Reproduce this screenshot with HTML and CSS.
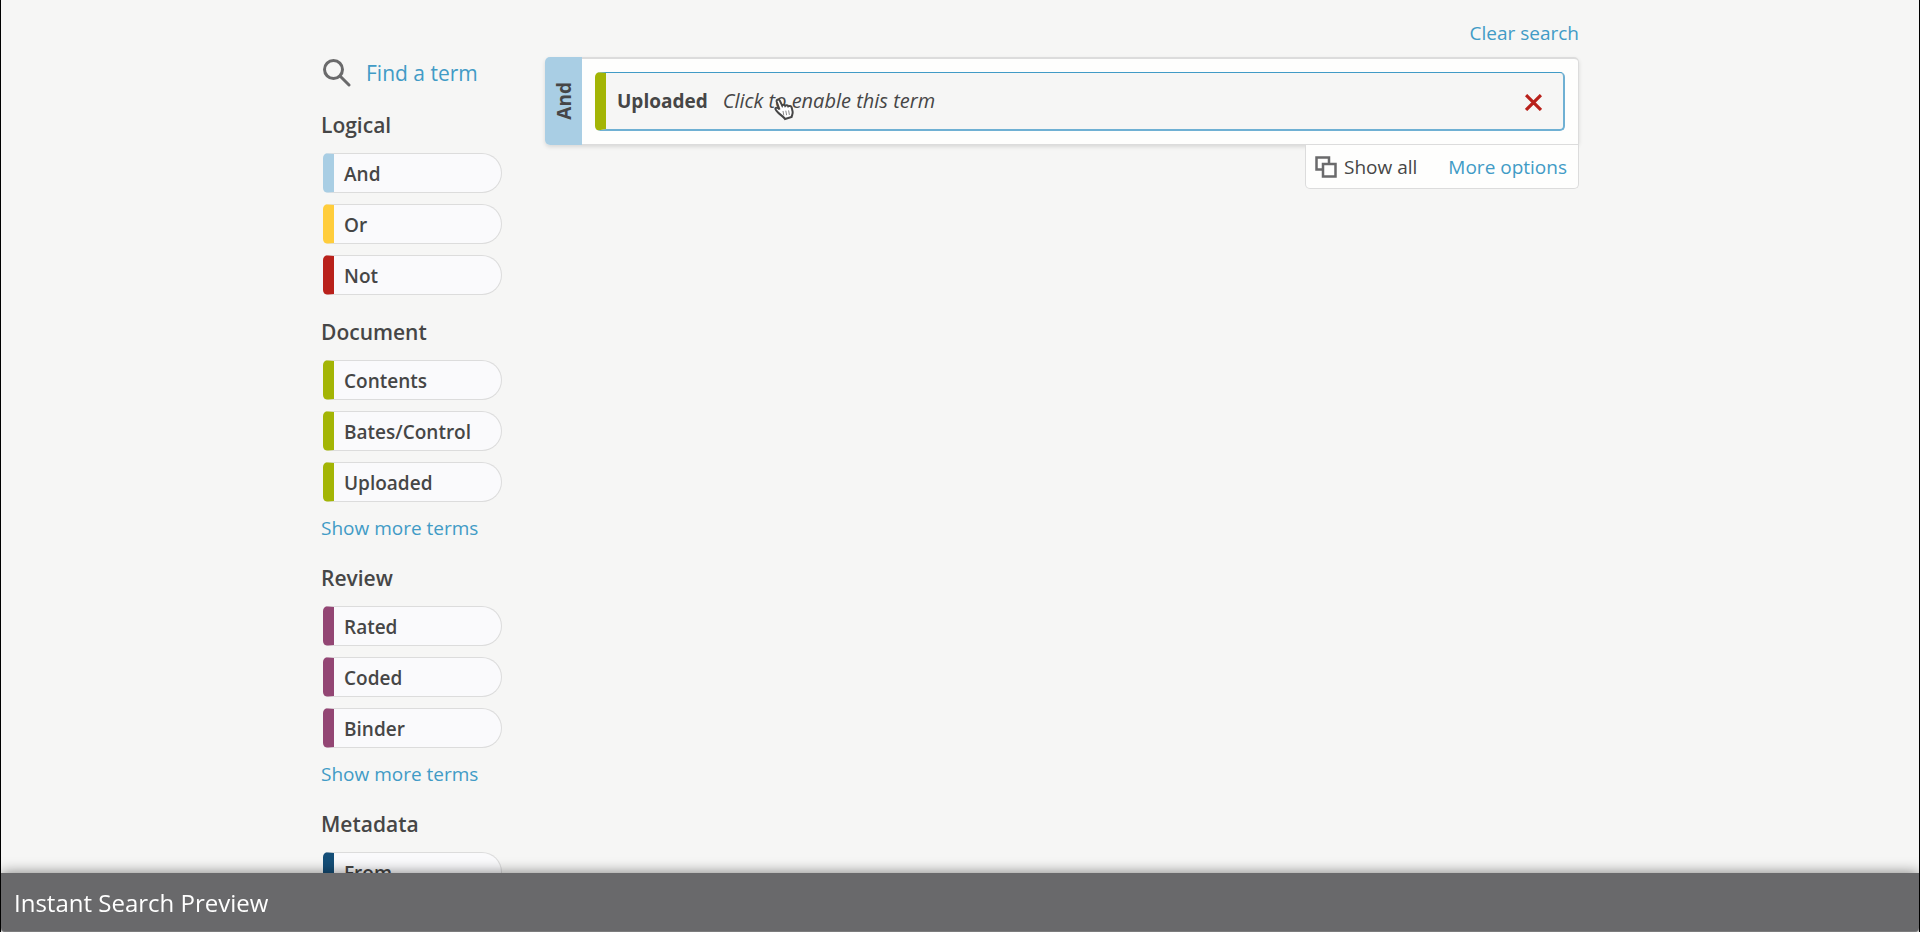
FILE: index.html
```html
<!DOCTYPE html>
<html lang="en">
<head>
    <meta charset="UTF-8">
    <title>Search</title>
    <link rel="stylesheet" href="styles.css">
</head>
<body>
    <div class="page">
        <aside class="sidebar">
            <div class="find">
                <svg class="find-icon" viewBox="0 0 28 28" aria-hidden="true">
                    <circle cx="10.5" cy="10.5" r="9"/>
                    <path d="M17 17l9 9"/>
                </svg>
                <a href="#">Find a term</a>
            </div>

            <section class="group">
                <h2>Logical</h2>
                <div class="terms">
                    <button type="button" class="term light-blue">And</button>
                    <button type="button" class="term yellow">Or</button>
                    <button type="button" class="term red">Not</button>
                </div>
            </section>

            <section class="group">
                <h2>Document</h2>
                <div class="terms">
                    <button type="button" class="term green">Contents</button>
                    <button type="button" class="term green">Bates/Control</button>
                    <button type="button" class="term green">Uploaded</button>
                </div>
                <a href="#" class="more">Show more terms</a>
            </section>

            <section class="group">
                <h2>Review</h2>
                <div class="terms">
                    <button type="button" class="term purple">Rated</button>
                    <button type="button" class="term purple">Coded</button>
                    <button type="button" class="term purple">Binder</button>
                </div>
                <a href="#" class="more">Show more terms</a>
            </section>

            <section class="group">
                <h2>Metadata</h2>
                <div class="terms">
                    <button type="button" class="term navy">From</button>
                </div>
            </section>
        </aside>

        <main class="builder">
            <a href="#" class="clear">Clear search</a>
            <div class="query">
                <div class="operator"><span>And</span></div>
                <div class="query-body">
                    <div class="query-term">
                        <strong>Uploaded</strong>
                        <em>Click to enable this term</em>
                        <button type="button" class="remove" aria-label="Remove term">
                            <svg viewBox="0 0 16 16"><path d="M1 1l14 14M15 1L1 15"/></svg>
                        </button>
                        <svg class="pointer" viewBox="0 0 22 24" aria-hidden="true">
                            <path d="M6.500 12.500L3.800 5C3 2.500 5.800 1.500 6.800 3.700l2.400 5c.6-1.300 2.500-1.200 3 .1.800-1 2.600-.8 3.100.5 1-.8 3-.2 3.300 1l1 4.200c.5 2-.6 3.500-1 5.500l-6.600 2c-1.500-2.500-4.500-4-7-6.500-1.800-1.800-3.200-3.500-2.500-4.300.9-1 3-.2 4 1.300z"/>
                            <path class="fingers" d="M10 14l.8 4.500M12.800 13.700l.8 4.500M15.600 13.400l.8 4.500"/>
                        </svg>
                    </div>
                </div>
            </div>
            <div class="options">
                <button type="button" class="show-all">
                    <svg viewBox="0 0 22 22" aria-hidden="true">
                        <path d="M1.500 1.500h12.500v12h-12.500z"/>
                        <path d="M8 8h12.500v12.500H8z"/>
                    </svg>
                    Show all
                </button>
                <a href="#">More options</a>
            </div>
        </main>
    </div>

    <footer class="preview">Instant Search Preview</footer>
</body>
</html>
```

FILE: styles.css
```css
* {
    box-sizing: border-box;
}
body {
    margin: 0;
    height: 100vh;
    overflow: hidden;
    background-color: #f6f6f5;
    border-left: 1px solid #000;
    border-right: 1px solid #000;
    font-family: "Open Sans", sans-serif;
    font-size: 19px;
    line-height: 26px;
    color: #464646;
}
a {
    color: #419bc6;
    text-decoration: none;
}
button {
    font: inherit;
    color: inherit;
    cursor: pointer;
}
.page {
    display: flex;
    gap: 43px;
    max-width: 1278px;
    margin: 0 auto;
    padding-right: 20px;
}

/* sidebar */
.sidebar {
    flex: none;
    width: 181px;
    padding-top: 58px;
}
.find {
    display: flex;
    align-items: center;
    gap: 15px;
    padding-left: 2px;
    font-size: 21px;
    line-height: 30px;
}
.find-icon {
    width: 28px;
    height: 28px;
    fill: none;
    stroke: #6a6a6b;
    stroke-width: 3;
    stroke-linecap: round;
}
.group {
    margin-top: 22px;
}
.group h2 {
    margin: 0 0 13px;
    font-size: 21px;
    font-weight: 600;
    line-height: 30px;
}
.terms {
    display: flex;
    flex-direction: column;
    gap: 11px;
    padding-left: 2px;
}
.term {
    width: 100%;
    height: 40px;
    padding: 1px 10px 0;
    background-color: #fafafc;
    border: 1px solid #dcdcdc;
    border-left: 11px solid;
    border-radius: 5px 20px 20px 5px;
    font-weight: 600;
    text-align: left;
}
.light-blue { border-left-color: #a9cee4; }
.yellow { border-left-color: #ffcd3c; }
.red { border-left-color: #b9211b; }
.green { border-left-color: #a3b505; }
.purple { border-left-color: #934674; }
.navy { border-left-color: #154f78; }
.more {
    display: block;
    margin-top: 13px;
}

/* query builder */
.builder {
    flex: 1;
    display: flex;
    flex-direction: column;
    align-items: flex-end;
    padding-top: 20px;
}
.query {
    align-self: stretch;
    display: flex;
    margin-top: 11px;
    border-radius: 5px;
    box-shadow: 0 2px 4px rgba(0, 0, 0, 0.12);
}
.operator {
    display: flex;
    align-items: center;
    justify-content: center;
    width: 37px;
    background-color: #a9cee4;
    border-radius: 5px 0 0 5px;
    font-weight: 700;
}
.operator span {
    writing-mode: vertical-rl;
    transform: rotate(180deg);
}
.query-body {
    flex: 1;
    padding: 13px;
    background-color: #fefefd;
    border: 1px solid #dcdcdc;
    border-top-width: 2px;
    border-left: 0;
    border-radius: 0 5px 0 0;
}
.query-term {
    position: relative;
    display: flex;
    align-items: center;
    height: 59px;
    padding: 0 21px 0 11px;
    background-color: #f6f6f5;
    border: 1px solid #419bc6;
    border-right: 2px solid #6fb0d3;
    border-bottom: 2px solid #6fb0d3;
    border-left: 11px solid #a3b505;
    border-radius: 5px;
}
.query-term em {
    margin-left: 15px;
    font-size: 20px;
}
.remove {
    display: flex;
    margin-left: auto;
    padding: 3px 0 0;
    background: none;
    border: 0;
}
.remove svg {
    width: 17px;
    height: 17px;
    stroke: #b9211b;
    stroke-width: 3;
}
.pointer {
    position: absolute;
    left: 167px;
    top: 24px;
    width: 22px;
    height: 24px;
    fill: #fff;
    stroke: #464646;
    stroke-width: 2;
}
.pointer .fingers {
    stroke: #8a8a8a;
    stroke-width: 1;
}
.options {
    display: flex;
    align-items: center;
    gap: 31px;
    height: 44px;
    padding: 0 11px 0 9px;
    background-color: #fefefd;
    border: 1px solid #dcdcdc;
    border-top: 0;
    border-radius: 0 0 5px 5px;
    z-index: 1;
}
.show-all {
    display: flex;
    align-items: center;
    gap: 7px;
    padding: 0;
    background: none;
    border: 0;
}
.show-all svg {
    width: 22px;
    height: 22px;
    fill: #fefefd;
    stroke: #6a6a6b;
    stroke-width: 2.5;
}

/* bottom bar */
.preview {
    position: fixed;
    right: 1px;
    bottom: 0;
    left: 1px;
    padding: 15px 13px 13px;
    background-color: #69696b;
    border-bottom: 1px solid #7c7c7d;
    border-radius: 0 0 4px 4px;
    box-shadow: 0 0 14px rgba(0, 0, 0, 0.5);
    color: #fff;
    font-size: 24px;
    line-height: 30px;
    z-index: 2;
}
```
